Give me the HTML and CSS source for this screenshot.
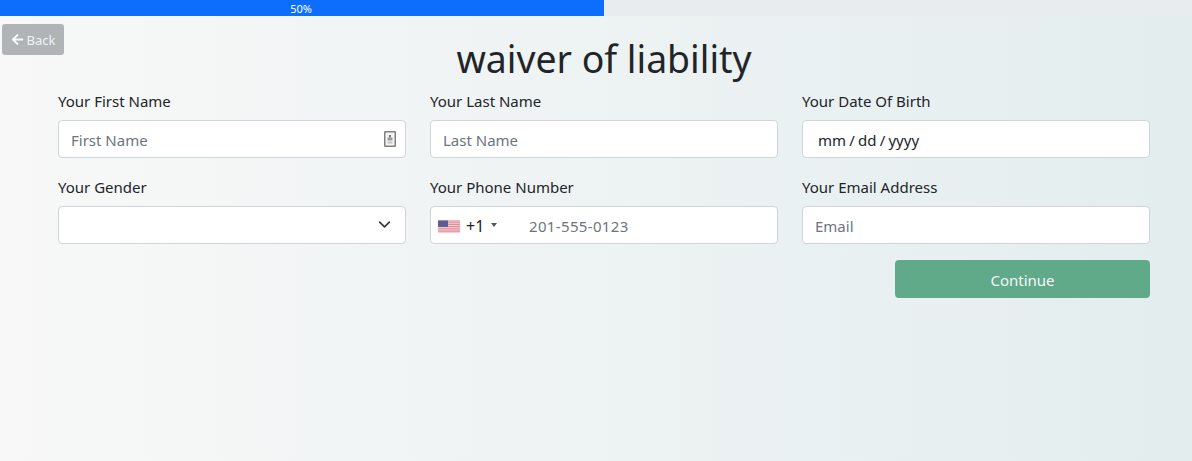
FILE: index.html
```html
<!DOCTYPE html>
<html lang="en">
<head>
<meta charset="utf-8">
<title>waiver of liability</title>
<link rel="stylesheet" href="styles.css">
</head>
<body>
<div class="page">
  <div class="progress"><div class="progress-bar">50%</div></div>
  <button class="back" type="button">
    <svg class="back-icon" viewBox="0 0 448 512" aria-hidden="true"><path d="M257.5 445.1l-22.2 22.2c-9.4 9.4-24.6 9.4-33.9 0L7 273c-9.4-9.4-9.4-24.6 0-33.9L201.4 44.7c9.4-9.4 24.6-9.4 33.9 0l22.2 22.2c9.5 9.5 9.3 25-.4 34.3L136.6 216H424c13.3 0 24 10.7 24 24v32c0 13.3-10.7 24-24 24H136.6l120.5 114.8c9.8 9.3 10 24.8.4 34.3z"/></svg>
    Back
  </button>
  <h1 class="title">waiver of liability</h1>
  <form class="form">
    <div class="grid">
      <div class="field">
        <label class="label">Your First Name</label>
        <div class="control">
          <input class="input" type="text" placeholder="First Name">
          <svg class="contact-icon" viewBox="0 0 12 16" aria-hidden="true">
            <rect x="0.75" y="0.75" width="10.5" height="14.5" rx="0.5" fill="#f4f4f4" stroke="#808080" stroke-width="1.5"/>
            <rect x="5" y="4" width="2" height="2.5" fill="#777"/>
            <rect x="3.5" y="6.5" width="5" height="3" fill="#999"/>
            <rect x="3.5" y="10.5" width="5" height="2" fill="#c4c4c4"/>
          </svg>
        </div>
      </div>
      <div class="field">
        <label class="label">Your Last Name</label>
        <input class="input" type="text" placeholder="Last Name">
      </div>
      <div class="field">
        <label class="label">Your Date Of Birth</label>
        <input class="input input-date" type="text" value="mm / dd / yyyy">
      </div>
      <div class="field">
        <label class="label">Your Gender</label>
        <div class="control">
          <select class="input select"><option></option></select>
          <svg class="chevron" viewBox="0 0 16 16" aria-hidden="true"><path fill="none" stroke="#343a40" stroke-linecap="round" stroke-linejoin="round" stroke-width="2" d="M2 5l6 6 6-6"/></svg>
        </div>
      </div>
      <div class="field">
        <label class="label">Your Phone Number</label>
        <div class="control">
          <input class="input input-phone" type="tel" placeholder="201-555-0123">
          <div class="dial">
            <svg class="flag" viewBox="0 0 22 12" aria-hidden="true">
              <rect width="22" height="12" fill="#f3dfe1"/>
              <path d="M0 .5h22M0 2.3h22M0 4.1h22M0 5.9h22M0 7.7h22M0 9.5h22M0 11.3h22" stroke="#e08490" stroke-width="1"/>
              <rect width="10" height="6.4" fill="#5c5c92"/>
            </svg>
            <span class="dial-code">+1</span>
            <span class="caret"></span>
          </div>
        </div>
      </div>
      <div class="field">
        <label class="label">Your Email Address</label>
        <input class="input" type="email" placeholder="Email">
      </div>
    </div>
    <div class="actions">
      <button class="continue" type="button">Continue</button>
    </div>
  </form>
</div>
</body>
</html>
```

FILE: styles.css
```css
* { box-sizing: border-box; }
html, body {
  margin: 0;
  height: 100%;
  overflow: hidden;
}
body {
  font-family: "Noto Sans", "Open Sans", sans-serif;
  font-size: 15px;
  color: #212529;
}
.page {
  position: relative;
  width: 1208px;
  height: 461px;
  background: linear-gradient(to right, #f8f8f8 0%, #e3edee 100%);
}
.progress {
  height: 16px;
  background: #e9ecef;
}
.progress-bar {
  width: 50%;
  height: 16px;
  padding: 1px 2px 0 0;
  background: #0d6efd;
  color: #fff;
  font-size: 11px;
  line-height: 15px;
  text-align: center;
}
.back {
  position: absolute;
  left: 2px;
  top: 24px;
  width: 62px;
  height: 31px;
  padding: 0;
  border: 0;
  border-radius: 3px;
  background: #b0b4b7;
  color: #f0f2f3;
  font: inherit;
  font-size: 13px;
  display: flex;
  align-items: center;
  justify-content: center;
  gap: 3px;
}
.back-icon {
  width: 13px;
  height: 13px;
  fill: #f8f9fa;
}
.title {
  margin: 0;
  height: 74px;
  padding-top: 19px;
  font-size: 37.4px;
  font-weight: 400;
  line-height: 48px;
  text-align: center;
}
.form {
  padding: 0 58px;
}
.grid {
  display: grid;
  grid-template-columns: repeat(3, 348px);
  column-gap: 24px;
  row-gap: 18px;
}
.label {
  display: block;
  height: 24px;
  margin-bottom: 6px;
  line-height: 22px;
}
.control {
  position: relative;
}
.input {
  display: block;
  width: 100%;
  height: 38px;
  padding: 2px 12px 0;
  border: 1px solid #ced4da;
  border-radius: 4px;
  background: #fff;
  color: #212529;
  font: inherit;
  outline: none;
}
.input::placeholder {
  color: #6c757d;
  opacity: 1;
}
.input-date {
  padding-left: 15px;
  word-spacing: -0.7px;
}
.input-phone {
  padding-left: 98px;
  letter-spacing: 0.35px;
}
.select {
  appearance: none;
}
.contact-icon {
  position: absolute;
  right: 10px;
  top: 11px;
  width: 12px;
  height: 16px;
}
.chevron {
  position: absolute;
  right: 15px;
  top: 12px;
  width: 13px;
  height: 13px;
}
.dial {
  position: absolute;
  left: 8px;
  top: 1px;
  height: 38px;
  display: flex;
  align-items: center;
}
.flag {
  width: 22px;
  height: 13px;
}
.dial-code {
  margin-left: 6px;
  font-size: 16px;
}
.caret {
  width: 0;
  height: 0;
  margin: 0 0 3px 7px;
  border-left: 3px solid transparent;
  border-right: 3px solid transparent;
  border-top: 4px solid #555;
}
.actions {
  display: flex;
  justify-content: flex-end;
  margin-top: 16px;
}
.continue {
  width: 255px;
  height: 38px;
  padding: 2px 0 0;
  border: 0;
  border-radius: 4px;
  background: #60aa8a;
  color: #f4f8f6;
  font: inherit;
}
```
